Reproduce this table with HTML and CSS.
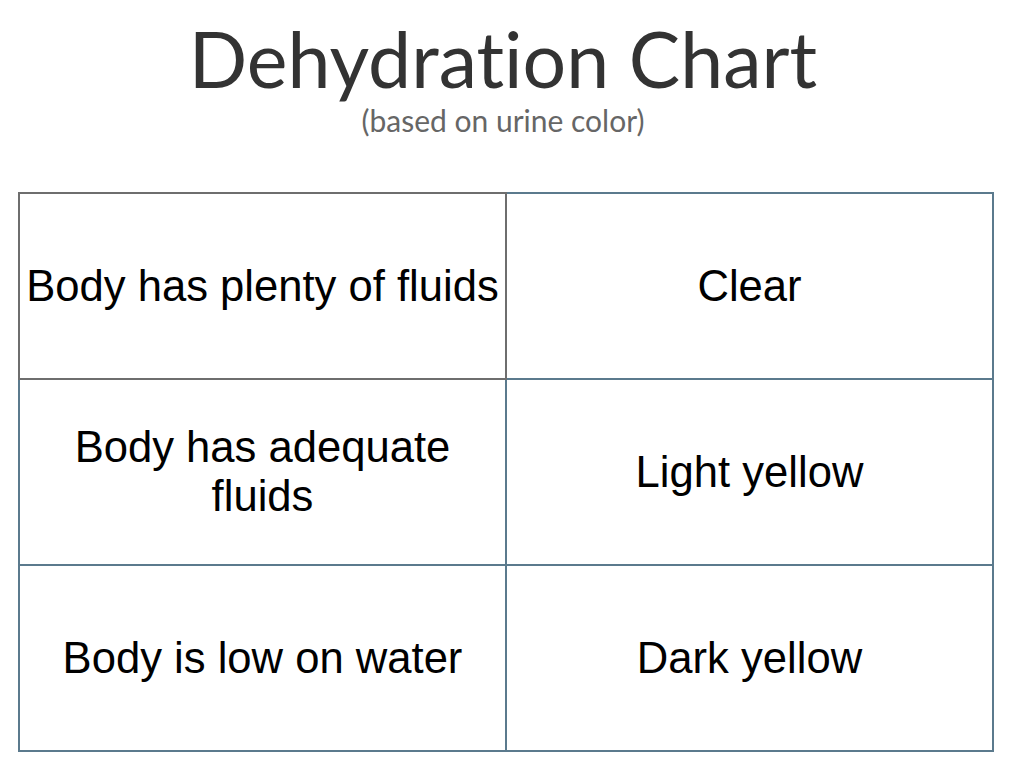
FILE: index.html
```html
<!DOCTYPE html>
<html>
<head>
<meta charset="utf-8">
<link rel="stylesheet" href="styles.css">
</head>
<body>
<header class="head">
  <h1 class="title">Dehydration Chart</h1>
  <p class="subtitle">(based on urine color)</p>
</header>
<table class="chart">
  <tr>
    <td class="cell first">Body has plenty of fluids</td>
    <td class="cell">Clear</td>
  </tr>
  <tr>
    <td class="cell">Body has adequate fluids</td>
    <td class="cell">Light yellow</td>
  </tr>
  <tr>
    <td class="cell">Body is low on water</td>
    <td class="cell">Dark yellow</td>
  </tr>
</table>
</body>
</html>
```
FILE: styles.css
```css
html, body {
  margin: 0;
  padding: 0;
  background: #ffffff;
}
body {
  padding: 0 30px 0 18px;
}
.head {
  text-align: center;
  padding-top: 13px;
  padding-right: 6px;
  height: 192px;
  box-sizing: border-box;
}
.title {
  margin: 0;
  font-family: Lato, "Open Sans", sans-serif;
  font-weight: 400;
  font-size: 77px;
  line-height: 90px;
  color: #333333;
  font-variant-ligatures: none;
}
.subtitle {
  margin: 0;
  font-family: Lato, "Open Sans", sans-serif;
  font-size: 30px;
  line-height: 34px;
  color: #666666;
  font-variant-ligatures: none;
}
.chart {
  width: 976px;
  border-collapse: collapse;
  table-layout: fixed;
}
.cell {
  width: 50%;
  height: 184px;
  padding: 0 3px;
  border: 2px solid #5b7a8d;
  text-align: center;
  vertical-align: middle;
  font-family: "Liberation Sans", Arial, sans-serif;
  font-size: 43.6px;
  line-height: 49px;
  color: #000000;
}
.cell.first {
  border-color: #6e6e6e;
}
```
